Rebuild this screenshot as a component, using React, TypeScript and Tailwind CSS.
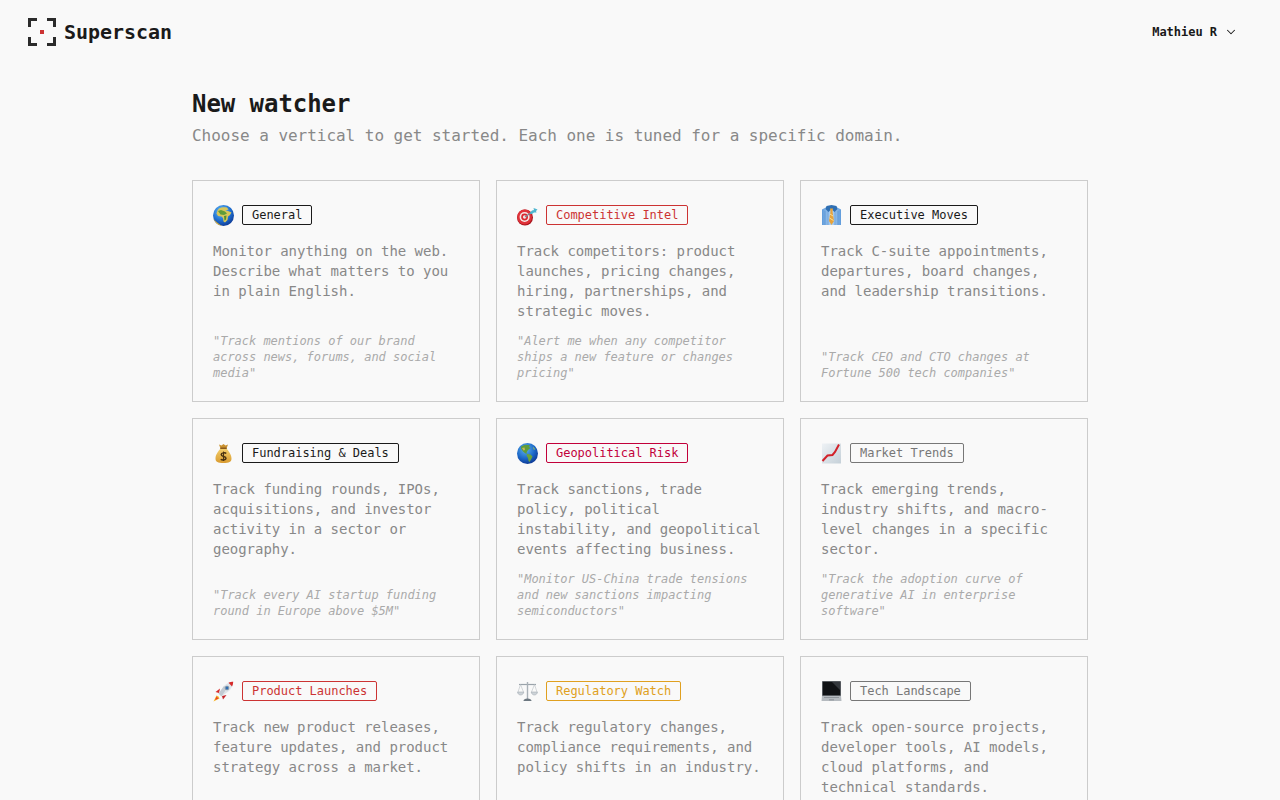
import type { ReactNode } from 'react';
import { ChevronDown } from 'lucide-react';

const Emoji = ({ children }: { children: ReactNode }) => (
  <svg width="21" height="21" viewBox="0 0 21 21" className="shrink-0">
    {children}
  </svg>
);

const GlobeAfrica = () => (
  <Emoji>
    <defs>
      <radialGradient id="seaA" cx="0.4" cy="0.3" r="0.8">
        <stop offset="0" stopColor="#6cc0f5" />
        <stop offset="0.55" stopColor="#1f6fd0" />
        <stop offset="1" stopColor="#0a2c86" />
      </radialGradient>
    </defs>
    <circle cx="10.5" cy="10.5" r="10.5" fill="url(#seaA)" />
    <path d="M0.6 13.5A10.5 10.5 0 0 0 9 20.9C5.5 19 2.5 16.5 0.6 13.5Z" fill="#d9b23c" />
    <path d="M6 3.5C8 2.5 11 2 14 2.6L15.5 4.5L12.5 5.5L15 6L18.5 7.5L17 10L15 11.5L14.5 15L12 17.5L10.5 16.5L10 13L8.5 11.5L5 11L3.5 8.5L4.5 5.5Z" fill="#d7c65a" />
    <path d="M5 6L8 5L12 6.5L14 8.5L11 10L7.5 9.5Z" fill="#5f9c3a" />
    <path d="M11 11L13.5 10.5L13 14.5L11.5 15.5Z" fill="#4e8f35" />
  </Emoji>
);

const GlobeAmericas = () => (
  <Emoji>
    <defs>
      <radialGradient id="seaB" cx="0.4" cy="0.3" r="0.8">
        <stop offset="0" stopColor="#5fb4ef" />
        <stop offset="0.55" stopColor="#1c68c8" />
        <stop offset="1" stopColor="#0a2c86" />
      </radialGradient>
    </defs>
    <circle cx="10.5" cy="10.5" r="10.5" fill="url(#seaB)" />
    <path d="M4 3.5L8 1.8L13 2.2L12 4L13.5 5L11 7L9.5 9.5L10.5 10.5L8.5 10.5L6 8.5L4 5.5Z" fill="#5f9c3a" />
    <path d="M10 11L13.5 11.5L15.5 13.5L14 16.5L12.5 19L11.5 18L11 15L9.5 12.5Z" fill="#6ba33e" />
    <path d="M16 3.5L18.5 6.5L16.5 6.5Z" fill="#8fb860" />
    <path d="M5 5L7.5 4.5L8 7L6.5 7.5Z" fill="#c9b857" />
  </Emoji>
);

const Target = () => (
  <Emoji>
    <circle cx="8" cy="12.5" r="8" fill="#a8141c" />
    <circle cx="7.6" cy="12" r="7.4" fill="#e0333a" />
    <circle cx="7.6" cy="12" r="5" fill="#f4e9e6" />
    <circle cx="7.6" cy="12" r="3.4" fill="#d92a32" />
    <circle cx="7.6" cy="12" r="1.7" fill="#f4e9e6" />
    <path d="M8 12L15 7" stroke="#7a8a96" strokeWidth="1.1" />
    <path d="M12.5 8.5L15 5.5L17 5L16.5 3L18 3.5L20.5 4.5L19 6L19.5 7.5L17 7.5L15 9Z" fill="#4fb6cf" />
  </Emoji>
);

const Shirt = () => (
  <Emoji>
    <defs>
      <linearGradient id="shirt" x1="0" x2="1" y1="0" y2="0">
        <stop offset="0" stopColor="#5f9bdb" />
        <stop offset="0.5" stopColor="#b5d6f5" />
        <stop offset="1" stopColor="#5f9bdb" />
      </linearGradient>
    </defs>
    <path d="M1 4.5L6.5 1.5H14.5L20 4.5V20H1Z" fill="url(#shirt)" />
    <path d="M4 6V20M7 6V20M14 6V20M17 6V20" stroke="#4f8bcd" strokeWidth="0.7" opacity="0.7" />
    <path d="M5.5 1L10.5 0L15.5 1L16.5 4L13.5 7L10.5 4L7.5 7L4.5 4Z" fill="#2f6fb3" />
    <path d="M9 3.5H12L11.5 6.5L13 16L10.5 20L8 16L9.5 6.5Z" fill="#e8a33a" />
    <path d="M9 9L12 11M8.5 13L12.5 15.5" stroke="#f8e6a8" strokeWidth="0.9" />
  </Emoji>
);

const MoneyBag = () => (
  <Emoji>
    <defs>
      <linearGradient id="bag" x1="0" x2="0" y1="0" y2="1">
        <stop offset="0" stopColor="#f3cf6d" />
        <stop offset="1" stopColor="#d99b2f" />
      </linearGradient>
    </defs>
    <path d="M6 1.5L8.5 2.5L10.5 1L12.5 2.5L15 1.5L13.5 5.5H7.5Z" fill="#c9912f" />
    <path d="M7.5 5.5H13.5C15.5 8 18.5 11.5 18.5 15.5C18.5 19 16 20 10.5 20C5 20 2.5 19 2.5 15.5C2.5 11.5 5.5 8 7.5 5.5Z" fill="url(#bag)" />
    <rect x="7.2" y="4.6" width="6.6" height="1.5" rx="0.7" fill="#8a5a1c" />
    <path d="M13.2 10.4C12.5 9.6 8.3 9.4 8.2 11.6C8.1 14 13.2 13 13 15.4C12.9 17.4 8.7 17.2 7.8 16.2" fill="none" stroke="#4a3312" strokeWidth="1.5" />
    <path d="M10.5 8.6V18" stroke="#4a3312" strokeWidth="1.1" />
  </Emoji>
);

const Chart = () => (
  <Emoji>
    <defs>
      <linearGradient id="chart" x1="0" x2="1" y1="0" y2="1">
        <stop offset="0" stopColor="#eef2f5" />
        <stop offset="1" stopColor="#c5d0d8" />
      </linearGradient>
    </defs>
    <rect x="1" y="0.5" width="19" height="20" fill="url(#chart)" />
    <path d="M1.5 18L6.5 12.5L11.5 12L14 9L18 1.5" fill="none" stroke="#d2222a" strokeWidth="2" />
  </Emoji>
);

const Rocket = () => (
  <Emoji>
    <path d="M3.5 14.5L0.5 20.5L6.5 17.5L5.5 15.5Z" fill="#f7b52c" />
    <path d="M3.5 15.5L2 19L5.5 17.5Z" fill="#e8402c" />
    <path d="M2.5 11L7 7.5L6 12Z" fill="#d62b2b" />
    <path d="M10 18.5L13.5 14L9 15Z" fill="#c42328" />
    <path d="M5.5 12.5L11 5C13.5 2.5 17 0.8 20.2 0.8C20.2 4 18.5 7.5 16 10L8.5 15.5Z" fill="#dfe5ea" />
    <path d="M5.5 12.5L11 5L14 7L8.5 15.5Z" fill="#aab4bd" opacity="0.55" />
    <path d="M15.5 1.8C17 1 18.8 0.8 20.2 0.8C20.2 2.4 19.8 4 19 5.5Z" fill="#d62b2b" />
    <circle cx="14" cy="7" r="1.9" fill="#2f6fb3" stroke="#8f9aa3" strokeWidth="0.8" />
  </Emoji>
);

const Scale = () => (
  <Emoji>
    <path d="M2 3.5H19" stroke="#9aa3aa" strokeWidth="1.2" />
    <path d="M10.5 1V18" stroke="#a9b1b7" strokeWidth="1.4" />
    <path d="M3.5 3.5L1 11M3.5 3.5L6.5 11M17.5 3.5L14.5 11M17.5 3.5L20 11" stroke="#b8bfc5" strokeWidth="0.6" />
    <path d="M0.5 11H6.8C6.5 13 5 14 3.6 14C2.2 14 0.8 13 0.5 11Z" fill="#cdd3d8" stroke="#98a1a8" strokeWidth="0.5" />
    <path d="M14.2 11H20.5C20.2 13 18.8 14 17.4 14C16 14 14.5 13 14.2 11Z" fill="#cdd3d8" stroke="#98a1a8" strokeWidth="0.5" />
    <path d="M6.5 20C6.5 18.5 8 17.5 10.5 17.5C13 17.5 14.5 18.5 14.5 20Z" fill="#6c7780" />
  </Emoji>
);

const Laptop = () => (
  <Emoji>
    <rect x="1" y="0" width="19" height="15" rx="0.8" fill="#55595e" />
    <rect x="2" y="1" width="17" height="13" fill="#101215" />
    <path d="M11 1H19V9Z" fill="#34383d" />
    <path d="M1 15H20L20.5 20H0.5Z" fill="#b5babf" />
    <path d="M3 16.5H18" stroke="#8f959b" strokeWidth="1" />
    <rect x="8" y="18" width="5" height="1.5" fill="#989ea4" />
  </Emoji>
);

const verticals = [
  { icon: <GlobeAfrica />, name: 'General', tag: 'border-[#1a1a1a] text-[#1a1a1a]', desc: 'Monitor anything on the web. Describe what matters to you in plain English.', example: '"Track mentions of our brand across news, forums, and social media"' },
  { icon: <Target />, name: 'Competitive Intel', tag: 'border-[#cc3333] text-[#cc3333]', desc: 'Track competitors: product launches, pricing changes, hiring, partnerships, and strategic moves.', example: '"Alert me when any competitor ships a new feature or changes pricing"' },
  { icon: <Shirt />, name: 'Executive Moves', tag: 'border-[#1a1a1a] text-[#1a1a1a]', desc: 'Track C-suite appointments, departures, board changes, and leadership transitions.', example: '"Track CEO and CTO changes at Fortune 500 tech companies"' },
  { icon: <MoneyBag />, name: 'Fundraising & Deals', tag: 'border-[#1a1a1a] text-[#1a1a1a]', desc: 'Track funding rounds, IPOs, acquisitions, and investor activity in a sector or geography.', example: '"Track every AI startup funding round in Europe above $5M"' },
  { icon: <GlobeAmericas />, name: 'Geopolitical Risk', tag: 'border-[#c2003a] text-[#c2003a]', desc: 'Track sanctions, trade policy, political instability, and geopolitical events affecting business.', example: '"Monitor US-China trade tensions and new sanctions impacting semiconductors"' },
  { icon: <Chart />, name: 'Market Trends', tag: 'border-[#777777] text-[#777777]', desc: 'Track emerging trends, industry shifts, and macro-level changes in a specific sector.', example: '"Track the adoption curve of generative AI in enterprise software"' },
  { icon: <Rocket />, name: 'Product Launches', tag: 'border-[#cc3333] text-[#cc3333]', desc: 'Track new product releases, feature updates, and product strategy across a market.', example: '"Track every new AI coding assistant launched this quarter"' },
  { icon: <Scale />, name: 'Regulatory Watch', tag: 'border-[#e0a020] text-[#e0a020]', desc: 'Track regulatory changes, compliance requirements, and policy shifts in an industry.', example: '"Monitor EU AI Act updates and new enforcement actions"' },
  { icon: <Laptop />, name: 'Tech Landscape', tag: 'border-[#777777] text-[#777777]', desc: 'Track open-source projects, developer tools, AI models, cloud platforms, and technical standards.', example: '"Track new LLM releases and benchmark results"' },
];

const Logo = () => (
  <svg width="28" height="28" viewBox="0 0 28 28" fill="none" stroke="#2b2b2b" strokeWidth="3">
    <path d="M1.5 9V1.5H9" />
    <path d="M19 1.5H26.5V9" />
    <path d="M1.5 19V26.5H9" />
    <path d="M19 26.5H26.5V19" />
    <rect x="12" y="12" width="4" height="4" fill="#cc3333" stroke="none" />
  </svg>
);

export default function App() {
  return (
    <div className="min-h-screen bg-[#f9f9f9] font-['DejaVu_Sans_Mono','Liberation_Mono',monospace]">
      <header className="flex h-16 items-center justify-between pl-7 pr-[42px]">
        <div className="flex items-center gap-2">
          <Logo />
          <span className="text-xl font-bold tracking-[-0.002em] text-[#1a1a1a]">Superscan</span>
        </div>
        <div className="flex items-center gap-[7px] text-xs font-bold tracking-[-0.002em] text-[#1a1a1a]">
          Mathieu R
          <ChevronDown size={14} strokeWidth={1.75} />
        </div>
      </header>

      <main className="mx-auto w-[896px] pt-6">
        <h1 className="text-2xl font-bold leading-8 tracking-[-0.002em] text-[#1a1a1a]">New watcher</h1>
        <p className="mt-1 mb-8 text-base leading-6 tracking-[-0.002em] text-[#888888]">
          Choose a vertical to get started. Each one is tuned for a specific domain.
        </p>

        <div className="grid grid-cols-3 gap-4">
          {verticals.map((v) => (
            <div key={v.name} className="flex h-[222px] flex-col border border-[#cccccc] p-5">
              <div className="flex h-7 items-center gap-2">
                {v.icon}
                <span className={`rounded-[2px] border px-[9px] text-xs leading-[18px] tracking-[-0.002em] ${v.tag}`}>{v.name}</span>
              </div>
              <p className="mt-3 text-sm leading-5 tracking-[-0.002em] text-[#888888]">{v.desc}</p>
              <p className="mt-auto text-xs italic leading-4 tracking-[-0.002em] text-[#aaaaaa]">{v.example}</p>
            </div>
          ))}
        </div>
      </main>
    </div>
  );
}
